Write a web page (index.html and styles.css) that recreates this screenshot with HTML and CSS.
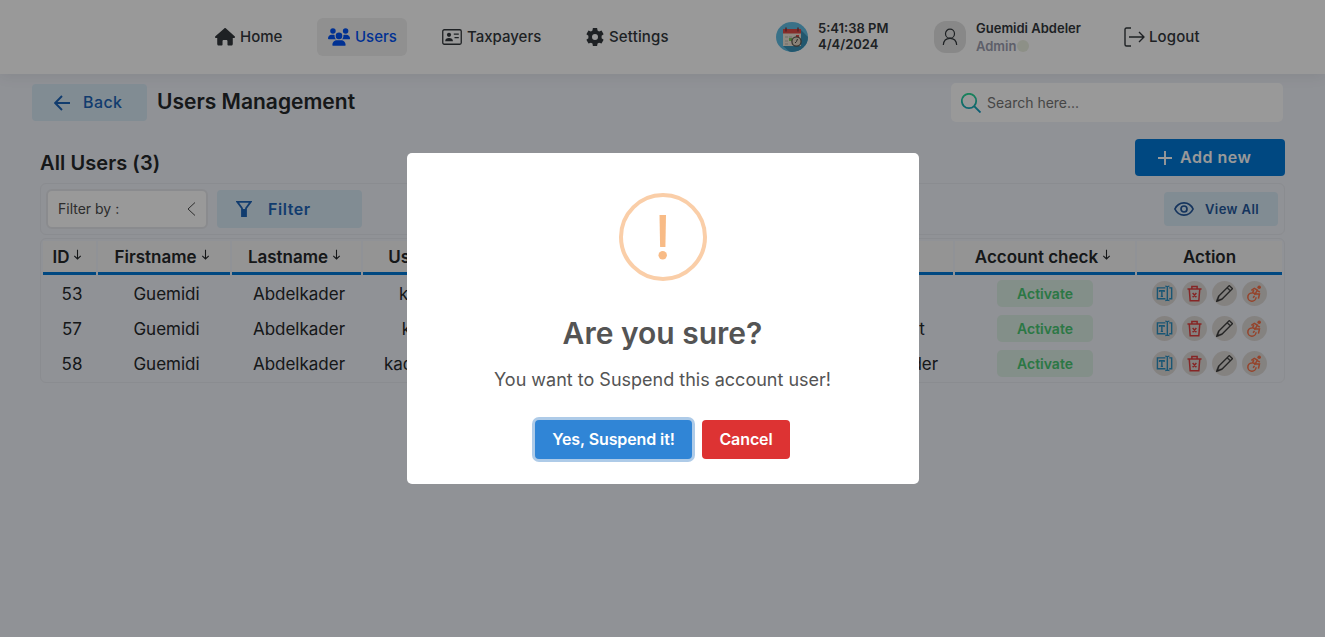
FILE: index.html
```html
<!DOCTYPE html>
<html lang="en">
<head>
<meta charset="utf-8">
<title>Users Management</title>
<link rel="stylesheet" href="styles.css">
</head>
<body>
<svg class="sprite" width="0" height="0">
  <symbol id="i-down" viewBox="0 0 10 12"><path d="M5 .8v10M1.400 7.400 5 11l3.600-3.600" fill="none" stroke="currentColor" stroke-width="1.200"/></symbol>
  <symbol id="i-rename" viewBox="0 0 18 18"><g fill="none" stroke="currentColor" stroke-width="1.500"><path d="M10 3H1.500v11.500H10M14 3h2.600v11.500H14M9.800 1.200c1.300 0 2.200.2 2.200 1v13.200c0 .8-.9 1-2.200 1M14.200 1.200c-1.300 0-2.200.2-2.200 1v13.200c0 .8.9 1 2.200 1M3.800 7.500V6h4.800v1.500M6.200 6v6M5 12h2.400"/></g></symbol>
  <symbol id="i-trash" viewBox="0 0 16 18"><g fill="none" stroke="currentColor" stroke-width="1.600"><path d="M.5 4.200h15M2.400 4.500l1 12.200h9.200l1-12.200M5.200 4V1.500h5.600V4M6 8.500l4 4.500M10 8.500 6 13"/></g></symbol>
  <symbol id="i-pencil" viewBox="0 0 16 16"><path d="M12.146.146a.5.5 0 0 1 .708 0l3 3a.5.5 0 0 1 0 .708l-10 10a.5.5 0 0 1-.168.11l-5 2a.5.5 0 0 1-.65-.65l2-5a.5.5 0 0 1 .11-.168zM11.207 2.500 13.500 4.793 14.793 3.500 12.500 1.207zm1.586 3L10.500 3.207 3.200 10.500l-1.100 3.400 3.400-1.100z" fill="currentColor" stroke="currentColor" stroke-width=".3"/></symbol>
  <symbol id="i-chair" viewBox="0 0 16 18"><circle cx="13" cy="2.300" r="1.900" fill="currentColor"/><path d="M4.600 5.600 7.800 3.600l3.200 1.700-2.300 4.200h4.600l-1.100 5M10.600 5.600 13.700 7.600M5 8.400A4.400 4.400 0 1 0 9.700 13M5 8.400c1.800-.3 3.300.5 4 2M7.400 5.400 5.800 8.400M8 11.500l-1.500 2" fill="none" stroke="currentColor" stroke-width="1.600"/></symbol>
</svg>

<header class="topbar">
  <nav class="nav">
    <a class="nav-item home"><svg width="20" height="18" viewBox="0 0 576 512"><path fill="currentColor" d="M575.800 255.500c0 18-15 32.100-32 32.100h-32l.7 160.200c0 35-20 56-48 56H392c-22 0-33-14-33-33v-95c0-18-14-32-32-32h-78c-18 0-32 14-32 32v95c0 19-11 33-33 33h-72c-28 0-48-21-48-56V287.600H32c-18 0-32-14-32-32.100 0-9 3-17 10-24L266.400 8c7-7 15-8 22-8s15 2 21 7l255.400 224.500c8 7 12 15 11 24z"/></svg><span>Home</span></a>
    <a class="nav-item users active"><svg width="22" height="18" viewBox="0 0 640 512"><path fill="currentColor" d="M144 0a80 80 0 1 1 0 160A80 80 0 1 1 144 0zM512 0a80 80 0 1 1 0 160A80 80 0 1 1 512 0zM0 298.700C0 239.800 47.800 192 106.700 192h42.700c15.900 0 31 3.500 44.600 9.700-1.300 7.200-1.900 14.700-1.900 22.300 0 38.200 16.800 72.500 43.300 96H21.300C9.600 320 0 310.400 0 298.700zM405.300 320c26.600-23.500 43.300-57.800 43.300-96 0-7.600-.7-15-1.900-22.300 13.600-6.300 28.700-9.700 44.600-9.700H534c58.900 0 106.700 47.800 106.700 106.700 0 11.800-9.600 21.300-21.300 21.300zM224 224a96 96 0 1 1 192 0 96 96 0 1 1-192 0zM128 485.300C128 411.700 187.700 352 261.300 352h117.400C452.300 352 512 411.700 512 485.300c0 14.700-11.900 26.700-26.700 26.700H154.700c-14.700 0-26.700-11.900-26.700-26.700z"/></svg><span>Users</span></a>
    <a class="nav-item tax"><svg width="20" height="16" viewBox="0 0 20 16"><rect x=".75" y=".75" width="18.500" height="14.500" rx="1.500" fill="none" stroke="currentColor" stroke-width="1.300"/><circle cx="7" cy="5.800" r="2.100" fill="currentColor"/><path d="M3.200 12.300c0-2.300 1.400-3.200 3.800-3.200s3.900.9 3.900 3.200z" fill="currentColor"/><path d="M11.800 5.200h5M12.500 8.600h4.300" stroke="currentColor" stroke-width="1.200"/></svg><span>Taxpayers</span></a>
    <a class="nav-item settings"><svg width="18" height="18" viewBox="0 0 24 24"><path fill="currentColor" fill-rule="evenodd" d="M9.200 0h5.600l.6 3.400 2 1.100 3.300-1.200 2.800 4.900-2.700 2.200v3.200l2.700 2.200-2.800 4.900-3.300-1.200-2 1.100-.6 3.400H9.200l-.6-3.400-2-1.100-3.300 1.200L.5 15.800l2.700-2.200v-3.200L.5 8.200l2.800-4.900 3.300 1.200 2-1.100zM12 8a4 4 0 1 0 0 8 4 4 0 0 0 0-8z"/></svg><span>Settings</span></a>
  </nav>
  <div class="clock">
    <svg width="32" height="30" viewBox="0 0 32 30"><defs><clipPath id="disc"><ellipse cx="16" cy="15" rx="16" ry="15"/></clipPath></defs><g clip-path="url(#disc)"><path fill="#60bde3" d="M0 0h32v30H0z"/><path fill="#3a91b8" d="m25 8 9 9v15H16l-9-8z"/></g><path fill="#eee5d8" d="M7 9h18v15H7z"/><path fill="#df4b46" d="M7 7h18v4.500H7z"/><path d="M10 5.500v4M22 5.500v4" stroke="#863b42" stroke-width="1.500"/><path d="M9 14h3v2H9zm4 0h3v2h-3zm-4 4h3v2H9zm0 3h3v2H9z" fill="#d3cec4"/><path fill="#7cc65d" d="M13 16h3v3h-3z"/><path fill="#df4b46" d="M20 13h3v3h-3z"/><circle cx="20.500" cy="19.500" r="4.600" fill="#e3d8c6" stroke="#5b5650" stroke-width="1.300"/><path d="m19 21 1.500-1.500 1-2.500" fill="none" stroke="#444" stroke-width="1"/></svg>
    <div class="stack">5:41:38 PM<br>4/4/2024</div>
  </div>
  <div class="profile">
    <span class="avatar"><svg width="16" height="18" viewBox="0 0 16 18"><circle cx="8" cy="5.700" r="4.500" fill="none" stroke="currentColor" stroke-width="1.200"/><path d="M1.300 17c.3-4 2.800-6.600 6.700-6.600s6.400 2.600 6.700 6.600" fill="none" stroke="currentColor" stroke-width="1.200"/></svg></span>
    <div class="who"><span>Guemidi Abdeler</span><span class="role">Admin<i class="dot"></i></span></div>
  </div>
  <a class="logout"><svg width="21" height="20" viewBox="0 0 21 20"><path d="M7 1H2.500Q1 1 1 2.500v15Q1 19 2.500 19H7M5 10h15M15 5l5 5-5 5" fill="none" stroke="currentColor" stroke-width="1.400" stroke-linejoin="round"/></svg><span>Logout</span></a>
</header>

<main class="page">
  <div class="titlebar">
    <button class="soft back"><svg width="16" height="16" viewBox="0 0 16 16"><path d="M16 8H1.200M8 1 1.200 8 8 15" fill="none" stroke="currentColor" stroke-width="1.900"/></svg><span>Back</span></button>
    <h1>Users Management</h1>
    <div class="search"><svg width="20" height="20" viewBox="0 0 20 20"><defs><linearGradient id="sg" x1="0" y1="0" x2="0" y2="1"><stop offset="0" stop-color="#2adb97"/><stop offset="1" stop-color="#1299c4"/></linearGradient></defs><path d="M15.200 8A7.200 7.200 0 1 1 .8 8a7.200 7.200 0 0 1 14.400 0zM13 13l6.500 6.500" fill="none" stroke="url(#sg)" stroke-width="1.800"/></svg>Search here...</div>
  </div>

  <div class="subbar">
    <h2>All Users (3)</h2>
    <button class="add"><svg width="14" height="14" viewBox="0 0 14 14"><path d="M7 0v14M0 7h14" stroke="currentColor" stroke-width="1.900"/></svg><span>Add new</span></button>
  </div>

  <div class="filters">
    <div class="select"><span>Filter by :</span><svg width="9" height="14" viewBox="0 0 9 14"><path d="M8 .5 1 7l7 6.500" fill="none" stroke="currentColor" stroke-width="1"/></svg></div>
    <button class="soft filter"><svg width="16" height="16" viewBox="0 0 16 16"><path d="M1.300.9h13.400L10 7.200V15H6V7.200z" fill="none" stroke="currentColor" stroke-width="1.800"/><path d="M6 8h4v7H6z" fill="currentColor"/></svg>Filter</button>
    <button class="soft view"><svg width="20" height="14" viewBox="0 0 20 14"><path d="M.9 7C2.800 3 6 .9 10 .9S17.200 3 19.100 7c-1.900 4-5.100 6.100-9.100 6.100S2.800 11 .9 7z" fill="none" stroke="currentColor" stroke-width="1.700"/><circle cx="10" cy="7" r="3" fill="none" stroke="currentColor" stroke-width="1.700"/></svg>View All</button>
  </div>

  <div class="table-box">
    <table>
      <colgroup><col class="c1"><col class="c2"><col class="c3"><col class="c4"><col class="c5"><col class="c6"><col class="c7"><col class="c8"></colgroup>
      <thead><tr>
        <th>ID<svg class="sort"><use href="#i-down"/></svg></th>
        <th>Firstname<svg class="sort"><use href="#i-down"/></svg></th>
        <th>Lastname<svg class="sort"><use href="#i-down"/></svg></th>
        <th class="uname">Username<svg class="sort"><use href="#i-down"/></svg></th>
        <th>Email<svg class="sort"><use href="#i-down"/></svg></th>
        <th>Role<svg class="sort"><use href="#i-down"/></svg></th>
        <th>Account check<svg class="sort"><use href="#i-down"/></svg></th>
        <th class="last">Action</th>
      </tr></thead>
      <tbody>
        <tr><td>53</td><td>Guemidi</td><td>Abdelkader</td><td>kader.dev</td><td></td><td>Admin</td><td><span class="badge">Activate</span></td>
          <td><div class="acts"><span class="act blue"><svg width="17" height="17"><use href="#i-rename"/></svg></span><span class="act red"><svg width="15" height="17"><use href="#i-trash"/></svg></span><span class="act dark"><svg width="17" height="17"><use href="#i-pencil"/></svg></span><span class="act orange"><svg width="15" height="17"><use href="#i-chair"/></svg></span></div></td></tr>
        <tr><td>57</td><td>Guemidi</td><td>Abdelkader</td><td>kader013</td><td></td><td>Tax consultant</td><td><span class="badge">Activate</span></td>
          <td><div class="acts"><span class="act blue"><svg width="17" height="17"><use href="#i-rename"/></svg></span><span class="act red"><svg width="15" height="17"><use href="#i-trash"/></svg></span><span class="act dark"><svg width="17" height="17"><use href="#i-pencil"/></svg></span><span class="act orange"><svg width="15" height="17"><use href="#i-chair"/></svg></span></div></td></tr>
        <tr><td>58</td><td>Guemidi</td><td>Abdelkader</td><td>kaderguemidi</td><td></td><td>Guemidi Abdelder</td><td><span class="badge">Activate</span></td>
          <td><div class="acts"><span class="act blue"><svg width="17" height="17"><use href="#i-rename"/></svg></span><span class="act red"><svg width="15" height="17"><use href="#i-trash"/></svg></span><span class="act dark"><svg width="17" height="17"><use href="#i-pencil"/></svg></span><span class="act orange"><svg width="15" height="17"><use href="#i-chair"/></svg></span></div></td></tr>
      </tbody>
    </table>
  </div>
</main>

<div class="overlay">
  <div class="modal" role="dialog">
    <svg class="warn" width="88" height="88" viewBox="0 0 88 88"><circle cx="44" cy="44" r="42" fill="none" stroke="#facea8" stroke-width="4"/><path d="M40.500 22h6.500l-.6 32h-5.300z" fill="#f8bb86"/><circle cx="43.700" cy="62.300" r="4.200" fill="#f8bb86"/></svg>
    <h3>Are you sure?</h3>
    <p>You want to Suspend this account user!</p>
    <div class="modal-actions"><button class="confirm">Yes, Suspend it!</button><button class="cancel">Cancel</button></div>
  </div>
</div>
</body>
</html>
```

FILE: styles.css
```css
* { box-sizing: border-box; }
body { margin: 0; height: 637px; overflow: hidden; background: #f0f3fa; color: #25282b; font-family: Inter, "Liberation Sans", sans-serif; }
button { border: 0; font-family: inherit; margin: 0; padding: 0; }
h1, h2, h3, p { margin: 0; }
svg { display: block; flex: none; }
.sprite { position: absolute; }

.topbar { height: 74px; background: #fff; display: flex; align-items: center; padding-left: 205px; box-shadow: 0 2px 14px rgba(0, 0, 0, .07); color: #33383c; }
.nav { display: flex; gap: 24px; }
.nav-item { display: flex; align-items: center; height: 38px; padding: 0 10px; gap: 5px; font-size: 15px; font-weight: 500; border-radius: 6px; white-space: nowrap; }
.nav-item span, .logout span, .back span, .add span, .select span { padding-bottom: 2px; }
.nav-item.home { width: 88px; }
.nav-item.users { width: 90px; padding-left: 11px; }
.nav-item.tax { width: 121px; padding-left: 11px; }
.nav-item.settings { width: 104px; letter-spacing: .15px; }
.nav-item.active { background: #f0f0f0; color: #0052f5; }
.clock { display: flex; align-items: center; gap: 10px; margin-left: 96px; width: 158px; font-size: 13px; line-height: 16px; font-weight: 600; }
.clock .stack { padding-bottom: 2px; }
.profile { display: flex; align-items: center; gap: 10px; width: 190px; }
.avatar { width: 32px; height: 32px; border-radius: 12px; background: #e3e3e3; display: flex; align-items: center; justify-content: center; }
.who { display: flex; flex-direction: column; font-size: 13px; line-height: 18px; font-weight: 600; white-space: nowrap; }
.role { display: flex; align-items: center; gap: 1px; color: #9c9eb0; }
.dot { width: 12px; height: 12px; border-radius: 50%; background: #ecf0e2; }
.logout { display: flex; align-items: center; gap: 4px; font-size: 15px; font-weight: 500; letter-spacing: .1px; }

.page { padding: 9px 40px 0; }
.titlebar { display: flex; align-items: center; height: 39px; margin: 0 2px 0 -8px; }
.soft { display: flex; align-items: center; background: #d7e9f6; color: #1d65b8; font-weight: 500; border-radius: 4px; letter-spacing: .4px; }
.back { width: 115px; height: 37px; padding-left: 22px; gap: 13px; font-size: 16px; }
h1 { margin-left: 10px; padding-bottom: 2px; font-size: 21px; font-weight: 600; }
.search { margin-left: auto; width: 332px; height: 39px; background: #fff; border-radius: 5px; display: flex; align-items: center; gap: 6px; padding-left: 10px; font-size: 14px; color: #757575; }
.subbar { display: flex; justify-content: space-between; align-items: center; height: 37px; margin-top: 17px; }
h2 { font-size: 20px; font-weight: 600; padding-top: 10px; letter-spacing: .08px; }
.add { width: 150px; height: 37px; background: #0078d7; color: #fff; border-radius: 4px; display: flex; align-items: center; gap: 8px; padding-left: 23px; font-size: 16px; font-weight: 600; letter-spacing: .5px; }
.filters { display: flex; align-items: center; margin-top: 7px; height: 52px; border: 1px solid #e7eaf0; border-radius: 6px; padding: 0 6px 0 5px; }
.select { width: 162px; height: 40px; background: #fff; border: 2px solid #e6e8ed; border-radius: 6px; display: flex; align-items: center; justify-content: space-between; padding: 0 10px; font-size: 14px; color: #4b4b4b; }
.filter { width: 145px; height: 38px; margin-left: 9px; padding-left: 19px; gap: 16px; font-size: 16px; font-weight: 600; letter-spacing: .55px; }
.view { width: 114px; height: 34px; margin-left: auto; padding-left: 10px; gap: 11px; font-size: 13px; font-weight: 600; color: #24589c; }

.table-box { margin-top: 3px; height: 145px; border: 1px solid #e7eaf0; border-radius: 6px; overflow: hidden; }
table { width: 1243px; table-layout: fixed; border-spacing: 2px; }
.c1 { width: 53px; } .c2 { width: 132px; } .c3 { width: 129px; } .c4 { width: 148px; }
.c5 { width: 267px; } .c6 { width: 171px; } .c7 { width: 180px; } .c8 { width: 145px; }
th { height: 34px; background: #f7f7f7; border-bottom: 3px solid #0078d7; font-size: 17px; font-weight: 600; padding: 0 4px 0 0; white-space: nowrap; line-height: 20px; }
th.last { padding: 0; }
th.uname { padding: 0; }
.sort { display: inline-block; width: 9px; height: 11px; margin-left: 4px; vertical-align: 3px; }
td { height: 33px; padding: 1px 0 0 5px; text-align: center; font-size: 17px; line-height: 20px; white-space: nowrap; }
td:nth-child(4) { padding-left: 3px; }
td:nth-child(6) { padding: 1px 3px 0 0; }
td:nth-child(7) { padding: 0; }
td:nth-child(8) { padding: 0; }
.badge { display: inline-block; width: 96px; height: 27px; line-height: 27px; border-radius: 5px; background: #dbeee4; color: #49c873; font-size: 14px; font-weight: 600; vertical-align: middle; }
.acts { display: flex; justify-content: center; gap: 5px; }
.act { width: 25px; height: 25px; border-radius: 50%; background: #ddd9d6; display: flex; align-items: center; justify-content: center; }
.blue { color: #2c8fc2; } .red { color: #df4040; } .dark { color: #3a3a3a; } .orange { color: #f87048; }

.overlay { position: fixed; inset: 0; background: rgba(0, 0, 0, .4); display: flex; align-items: center; justify-content: center; }
.modal { width: 512px; height: 331px; background: #fff; border-radius: 5px; display: flex; flex-direction: column; align-items: center; padding-top: 40px; color: #545454; }
h3 { margin-top: 34px; font-size: 30px; line-height: 36px; font-weight: 600; }
.modal p { margin-top: 18px; font-size: 18px; line-height: 22px; }
.modal-actions { display: flex; gap: 10px; margin-top: 29px; }
.modal-actions button { height: 39px; padding-bottom: 2px; border-radius: 4px; color: #fff; font-size: 16px; font-weight: 600; letter-spacing: -.1px; }
.confirm { width: 157px; background: #3085d6; box-shadow: 0 0 0 3px #aecbe8; }
.cancel { width: 88px; background: #dd3333; }
```
